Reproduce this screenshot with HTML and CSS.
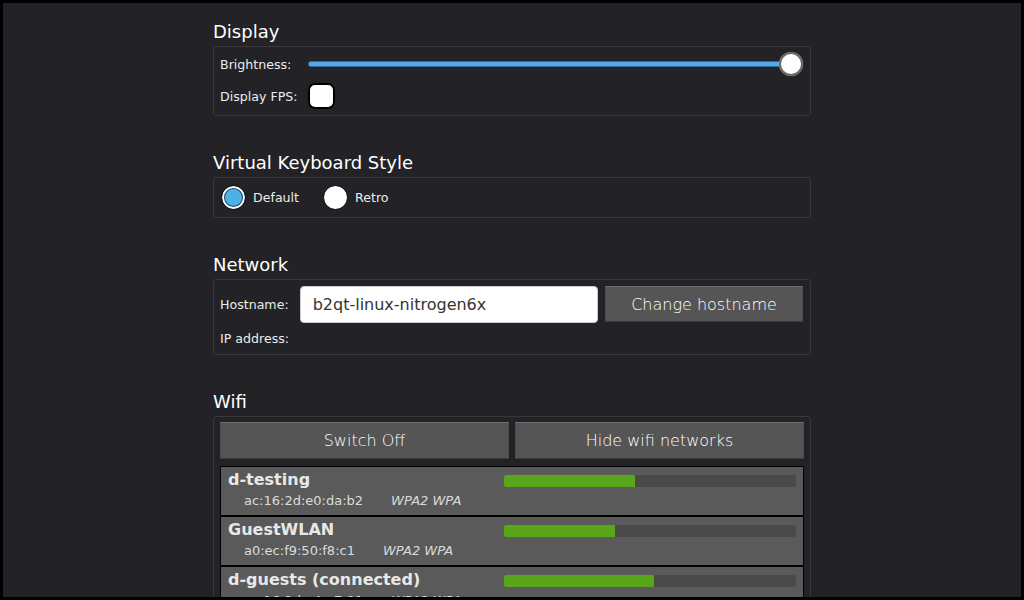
FILE: index.html
```html
<!DOCTYPE html>
<html>
<head>
<meta charset="utf-8">
<link rel="stylesheet" href="styles.css">
</head>
<body>
<div class="screen">
  <div class="column">
    <section class="section">
      <h2 class="heading">Display</h2>
      <div class="box display-box">
        <span class="label">Brightness:</span>
        <div class="slider"><div class="track"></div><div class="knob"></div></div>
        <span class="label">Display FPS:</span>
        <div class="cell"><div class="checkbox"></div></div>
      </div>
    </section>

    <section class="section">
      <h2 class="heading">Virtual Keyboard Style</h2>
      <div class="box kb-box">
        <div class="radio-item"><span class="radio checked"></span><span class="label">Default</span></div>
        <div class="radio-item"><span class="radio"></span><span class="label">Retro</span></div>
      </div>
    </section>

    <section class="section">
      <h2 class="heading">Network</h2>
      <div class="box net-box">
        <span class="label">Hostname:</span>
        <div class="input">b2qt-linux-nitrogen6x</div>
        <div class="button host-btn">Change hostname</div>
        <span class="label ip">IP address:</span>
      </div>
    </section>

    <section class="section">
      <h2 class="heading">Wifi</h2>
      <div class="box wifi-box">
        <div class="wifi-buttons">
          <div class="button">Switch Off</div>
          <div class="button">Hide wifi networks</div>
        </div>
        <div class="wifi-list">
          <div class="wifi-item">
            <div class="wifi-info">
              <div class="wifi-name">d-testing</div>
              <div class="wifi-detail"><span class="mac">ac:16:2d:e0:da:b2</span><span class="sec">WPA2 WPA</span></div>
            </div>
            <div class="bar"><div class="fill" style="width:45%"></div></div>
          </div>
          <div class="wifi-item">
            <div class="wifi-info">
              <div class="wifi-name">GuestWLAN</div>
              <div class="wifi-detail"><span class="mac">a0:ec:f9:50:f8:c1</span><span class="sec">WPA2 WPA</span></div>
            </div>
            <div class="bar"><div class="fill" style="width:38%"></div></div>
          </div>
          <div class="wifi-item">
            <div class="wifi-info">
              <div class="wifi-name">d-guests (connected)</div>
              <div class="wifi-detail"><span class="mac">ac:16:2d:e4:e7:01</span><span class="sec">WPA2 WPA</span></div>
            </div>
            <div class="bar"><div class="fill" style="width:51.5%"></div></div>
          </div>
        </div>
      </div>
    </section>
  </div>
</div>
</body>
</html>
```

FILE: styles.css
```css
* { box-sizing: border-box; }
html, body { margin: 0; padding: 0; background: #000; }
body { font-family: "DejaVu Sans", "Liberation Sans", sans-serif; color: #fff; }

.screen {
  width: 1024px;
  height: 600px;
  border: 3px solid #000;
  background: #222227;
  overflow: hidden;
}

.column {
  width: 598px;
  margin: 0 auto;
  padding-top: 18px;
}

.section { margin-bottom: 36px; }

.heading {
  font-size: 18px;
  line-height: 22px;
  font-weight: normal;
  margin: 0 0 3px;
  color: #fff;
}

.box {
  border: 1px solid #38383d;
  border-radius: 3px;
}

.label {
  font-size: 12.6px;
  color: #ececec;
  white-space: nowrap;
}

/* Display */
.display-box {
  height: 70px;
  display: grid;
  grid-template-columns: auto 1fr;
  grid-template-rows: 24px 26px;
  column-gap: 10px;
  row-gap: 7px;
  align-items: center;
  padding: 5px 7px 0 6px;
}

.slider {
  position: relative;
  height: 24px;
  display: flex;
  align-items: center;
}
.track {
  flex: 1;
  height: 6px;
  margin-right: 4px;
  border-radius: 3px;
  background: #56a8e8;
  border: 1px solid #2f6c9e;
}
.knob {
  position: absolute;
  right: 0;
  top: 0;
  width: 24px;
  height: 24px;
  border-radius: 50%;
  background: #fff;
  border: 2px solid #6b6b6b;
  box-shadow: 0 0 1px #999;
}
.cell { display: flex; align-items: center; }
.checkbox {
  width: 27px;
  height: 26px;
  border-radius: 7px;
  background: #fff;
  border: 2px solid #000;
}

/* Keyboard */
.kb-box {
  height: 41px;
  display: flex;
  align-items: center;
  padding: 0 6px 1px 7px;
  gap: 24px;
}
.radio-item { display: flex; align-items: center; gap: 7px; }
.radio {
  width: 25px;
  height: 25px;
  border-radius: 50%;
  background: #fff;
  border: 1.5px solid #000;
  display: inline-block;
}
.radio.checked {
  background: #4cb1e6;
  box-shadow: inset 0 0 0 2px #fff, inset 0 0 0 3px #1d3f72;
}

/* Network */
.net-box {
  height: 76px;
  display: grid;
  grid-template-columns: auto 1fr 198px;
  grid-template-rows: 37px 31px;
  column-gap: 7px;
  align-items: center;
  padding: 6px 7px 0 6px;
}
.net-box .label:first-child { margin-right: 4px; }
.input {
  height: 37px;
  background: #fff;
  border-radius: 4px;
  border: 1px solid #ccc;
  color: #333;
  font-size: 16px;
  display: flex;
  align-items: center;
  padding-left: 12px;
}
.ip { grid-column: 1 / 2; }

.button {
  background: #555555;
  border-top: 1px solid #6e6e6e;
  border-left: 1px solid #4c4c4c;
  border-right: 1px solid #4c4c4c;
  border-bottom: 1px solid #3a3a3a;
  color: #ffffff;
  font-size: 16px;
  font-weight: 200;
  display: flex;
  align-items: center;
  justify-content: center;
  height: 37px;
}
.host-btn { height: 36px; align-self: start; }

/* Wifi */
.wifi-box {
  padding: 5px 6px 0 6px;
  height: 300px;
}
.wifi-buttons {
  display: grid;
  grid-template-columns: 1fr 1fr;
  column-gap: 6px;
}
.wifi-list { margin-top: 7px; }
.wifi-item {
  height: 50px;
  background: #5a5a5a;
  border: 1px solid #000;
  display: flex;
  justify-content: space-between;
  padding: 3px 7px 0 7px;
}
.wifi-info { flex: 1; }
.wifi-name {
  font-size: 16px;
  font-weight: bold;
  color: #e8e8e8;
  line-height: 20px;
}
.wifi-detail {
  font-size: 13px;
  color: #dcdcdc;
  padding-left: 16px;
  line-height: 18px;
  margin-top: 2px;
}
.sec { font-style: italic; margin-left: 28px; }
.bar {
  width: 292px;
  height: 12px;
  margin-top: 5px;
  background: #4a4a4a;
  border-radius: 2px;
  overflow: hidden;
}
.fill {
  height: 100%;
  background: #5aa61b;
}
```
